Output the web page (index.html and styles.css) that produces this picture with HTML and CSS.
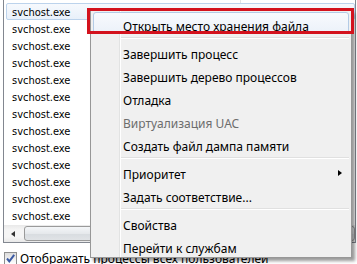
FILE: index.html
```html
<!DOCTYPE html>
<html lang="ru">

<head>
    <meta charset="utf-8" />
    <title>Диспетчер задач</title>
    <link rel="stylesheet" href="styles.css">
</head>

<body>
    <div class="window">
        <div class="list">
            <div class="rows">
                <div class="row selected">svchost.exe</div>
                <div class="row">svchost.exe</div>
                <div class="row">svchost.exe</div>
                <div class="row">svchost.exe</div>
                <div class="row">svchost.exe</div>
                <div class="row">svchost.exe</div>
                <div class="row">svchost.exe</div>
                <div class="row">svchost.exe</div>
                <div class="row">svchost.exe</div>
                <div class="row">svchost.exe</div>
                <div class="row">svchost.exe</div>
                <div class="row">svchost.exe</div>
                <div class="row">svchost.exe</div>
            </div>
            <div class="hscroll">
                <div class="scroll-btn"><span class="arrow-left"></span></div>
                <div class="thumb"></div>
            </div>
        </div>
        <label class="show-all">
            <span class="checkbox">
                <svg width="11" height="11" viewBox="0 0 11 11">
                    <path d="M2 5.5 L4.3 8.3 L9.2 1.8" fill="none" stroke="#3b5aa3" stroke-width="2" />
                </svg>
            </span>
            Отображать процессы всех пользователей
        </label>
    </div>

    <div class="menu">
        <div class="item hover">Открыть место хранения файла</div>
        <div class="sep"></div>
        <div class="item">Завершить процесс</div>
        <div class="item">Завершить дерево процессов</div>
        <div class="item">Отладка</div>
        <div class="item disabled">Виртуализация UAC</div>
        <div class="item">Создать файл дампа памяти</div>
        <div class="sep"></div>
        <div class="item">Приоритет<span class="sub-arrow"></span></div>
        <div class="item">Задать соответствие...</div>
        <div class="sep"></div>
        <div class="item">Свойства</div>
        <div class="item">Перейти к службам</div>
        <div class="mark"></div>
    </div>
</body>

</html>
```

FILE: styles.css
```css
body {
    margin: 0;
    width: 357px;
    height: 264px;
    overflow: hidden;
    background-color: #fff;
    position: relative;
}

.window {
    display: flex;
    flex-direction: column;
}

.list {
    margin: 0 1px 0 3px;
    border: solid 1px #828790;
    border-top: none;
    background-color: #fff;
}

.rows {
    padding-top: 3px;
    background-image: linear-gradient(to right, transparent 236px, #e3e3e3 236px, #e3e3e3 237px, transparent 237px);
}

.row {
    height: 17px;
    line-height: 17px;
    margin-left: 2px;
    padding-left: 5px;
    border: solid 1px transparent;
    box-sizing: border-box;
    font-family: "DejaVu Sans Condensed", "Liberation Sans", sans-serif;
    font-size: 11px;
    color: #000;
}

.row.selected {
    border-color: #bcd3ec;
    border-radius: 2px;
    background: linear-gradient(#f6f9fd, #e8f0fa);
}

.hscroll {
    display: flex;
    align-items: center;
    height: 17px;
    margin-top: 1px;
    background: linear-gradient(#e9e9e9, #f5f5f5 30%, #f5f5f5 70%, #e9e9e9);
}

.scroll-btn {
    width: 17px;
    height: 17px;
    display: flex;
    align-items: center;
    justify-content: center;
}

.arrow-left {
    width: 0;
    height: 0;
    border-top: solid 3.5px transparent;
    border-bottom: solid 3.5px transparent;
    border-right: solid 4px #333;
}

.thumb {
    flex: 1;
    height: 13px;
    margin-left: 3px;
    border: solid 1px #9a9a9a;
    border-radius: 3px;
    background: linear-gradient(#f4f6f8, #e6e9ec 50%, #d8dce0 51%, #e0e3e6);
}

.show-all {
    display: flex;
    align-items: center;
    gap: 3px;
    margin: 7px 0 0 4px;
    font-family: "Noto Sans", "Open Sans", sans-serif;
    font-size: 12px;
    color: #000;
    white-space: nowrap;
}

.checkbox {
    width: 13px;
    height: 13px;
    box-sizing: border-box;
    border: solid 1px #8e8f8f;
    background: linear-gradient(#dcdcdc, #fff);
    display: flex;
    align-items: center;
    justify-content: center;
}

.menu {
    position: absolute;
    left: 90px;
    top: 10px;
    width: 262px;
    box-sizing: border-box;
    padding-top: 1px;
    border: solid 1px #979797;
    background-color: #f0f0f0;
    background-image: linear-gradient(to right, transparent 28px, #e2e3e3 28px, #e2e3e3 29px, #fff 29px, #fff 30px, transparent 30px);
    box-shadow: 3px 3px 3px rgba(0, 0, 0, 0.4);
    font-family: "Noto Sans", "Open Sans", sans-serif;
    font-size: 12px;
    color: #000;
}

.item {
    position: relative;
    z-index: 0;
    display: flex;
    justify-content: space-between;
    align-items: center;
    height: 23px;
    box-sizing: border-box;
    padding: 7px 9px 0 32px;
    line-height: 16px;
    white-space: nowrap;
}

.item.hover::before {
    content: "";
    position: absolute;
    z-index: -1;
    left: 2px;
    right: 2px;
    top: 0;
    bottom: 1px;
    border: solid 1px #b3cbe6;
    border-radius: 3px;
    background: linear-gradient(#f8fafd, #ebf1f9);
}

.item.disabled {
    color: #6d6d6d;
}

.sub-arrow {
    width: 0;
    height: 0;
    margin-top: -5px;
    border-top: solid 3.5px transparent;
    border-bottom: solid 3.5px transparent;
    border-left: solid 4px #000;
}

.sep {
    height: 5px;
    margin: 0 2px 0 30px;
    display: flex;
    align-items: center;
}

.sep::before {
    content: "";
    flex: 1;
    border-top: solid 1px #e0e0e0;
    border-bottom: solid 1px #fff;
}

.mark {
    position: absolute;
    left: -4px;
    top: -3px;
    width: 267px;
    height: 26px;
    box-sizing: border-box;
    border: solid 3px #d3121d;
}
```
